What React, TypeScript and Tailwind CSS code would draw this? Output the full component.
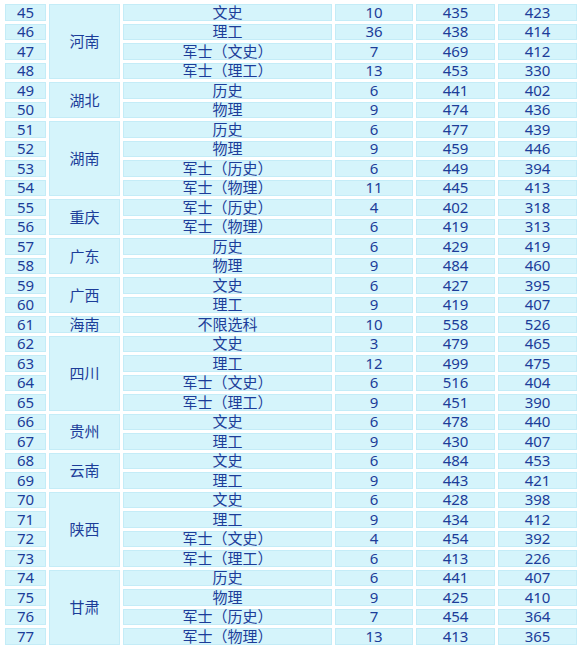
import React from 'react';

type Row = [number, string, number, number, number];

const GROUPS: { province: string; rows: Row[] }[] = [
  { province: '河南', rows: [[45, '文史', 10, 435, 423], [46, '理工', 36, 438, 414], [47, '军士（文史）', 7, 469, 412], [48, '军士（理工）', 13, 453, 330]] },
  { province: '湖北', rows: [[49, '历史', 6, 441, 402], [50, '物理', 9, 474, 436]] },
  { province: '湖南', rows: [[51, '历史', 6, 477, 439], [52, '物理', 9, 459, 446], [53, '军士（历史）', 6, 449, 394], [54, '军士（物理）', 11, 445, 413]] },
  { province: '重庆', rows: [[55, '军士（历史）', 4, 402, 318], [56, '军士（物理）', 6, 419, 313]] },
  { province: '广东', rows: [[57, '历史', 6, 429, 419], [58, '物理', 9, 484, 460]] },
  { province: '广西', rows: [[59, '文史', 6, 427, 395], [60, '理工', 9, 419, 407]] },
  { province: '海南', rows: [[61, '不限选科', 10, 558, 526]] },
  { province: '四川', rows: [[62, '文史', 3, 479, 465], [63, '理工', 12, 499, 475], [64, '军士（文史）', 6, 516, 404], [65, '军士（理工）', 9, 451, 390]] },
  { province: '贵州', rows: [[66, '文史', 6, 478, 440], [67, '理工', 9, 430, 407]] },
  { province: '云南', rows: [[68, '文史', 6, 484, 453], [69, '理工', 9, 443, 421]] },
  { province: '陕西', rows: [[70, '文史', 6, 428, 398], [71, '理工', 9, 434, 412], [72, '军士（文史）', 4, 454, 392], [73, '军士（理工）', 6, 413, 226]] },
  { province: '甘肃', rows: [[74, '历史', 6, 441, 407], [75, '物理', 9, 425, 410], [76, '军士（历史）', 7, 454, 364], [77, '军士（物理）', 13, 413, 365]] },
];

const SPAN: Record<number, string> = {
  1: 'row-span-1',
  2: 'row-span-2',
  4: 'row-span-4',
};

const cell = 'flex items-center justify-center bg-[#d5f4fb] border border-[#c4ecf7] leading-none';

const App: React.FC = () => {
  return (
    <div className="w-[584px] h-[651px] bg-white pt-[4px] pl-[5px] text-[15px] text-[#1c3d99] font-['Noto_Sans','Noto_Sans_CJK_SC',sans-serif] overflow-hidden">
      <div className="grid grid-cols-[41px_71px_209px_78px_79px_79px] auto-rows-[16.5px] gap-[3px]">
        {GROUPS.map(g =>
          g.rows.map((r, i) => (
            <React.Fragment key={r[0]}>
              <div className={cell}>{r[0]}</div>
              {i === 0 && <div className={`${cell} ${SPAN[g.rows.length]}`}>{g.province}</div>}
              <div className={cell}>{r[1]}</div>
              <div className={cell}>{r[2]}</div>
              <div className={cell}>{r[3]}</div>
              <div className={cell}>{r[4]}</div>
            </React.Fragment>
          ))
        )}
      </div>
    </div>
  );
};

export default App;
